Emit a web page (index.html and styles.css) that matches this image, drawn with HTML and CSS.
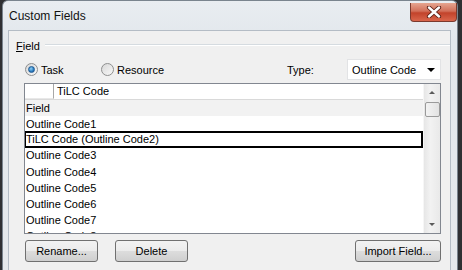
FILE: index.html
```html
<!DOCTYPE html>
<html lang="en">
<head>
    <meta charset="UTF-8">
    <title>Custom Fields</title>
    <link rel="stylesheet" href="styles.css">
</head>
<body>
    <div class="window">
        <div class="titlebar">
            <span class="title">Custom Fields</span>
            <div class="close-btn">
                <svg width="18" height="12" viewBox="0 0 18 12">
                    <path d="M4 1.5 L14 10.5 M14 1.5 L4 10.5" stroke="#5a1e14" stroke-width="4.2" stroke-linecap="round"/>
                    <path d="M4 1.5 L14 10.5 M14 1.5 L4 10.5" stroke="#ffffff" stroke-width="2.4" stroke-linecap="round"/>
                </svg>
            </div>
        </div>

        <div class="client">
            <div class="group-head">
                <span class="group-label"><u>F</u>ield</span>
                <span class="group-line"></span>
            </div>

            <div class="option-row">
                <label class="radio">
                    <span class="radio-dot checked"></span>Task
                </label>
                <label class="radio">
                    <span class="radio-dot"></span>Resource
                </label>
                <span class="type-label">Type:</span>
                <div class="combo">
                    <span>Outline Code</span>
                    <span class="combo-arrow"></span>
                </div>
            </div>

            <div class="list">
                <div class="list-body">
                    <div class="edit-row">
                        <span class="edit-cell"></span>
                        <span class="edit-text">TiLC Code</span>
                    </div>
                    <div class="list-header">Field</div>
                    <div class="list-row">Outline Code1</div>
                    <div class="list-row selected">TiLC Code (Outline Code2)</div>
                    <div class="list-row">Outline Code3</div>
                    <div class="list-row">Outline Code4</div>
                    <div class="list-row">Outline Code5</div>
                    <div class="list-row">Outline Code6</div>
                    <div class="list-row">Outline Code7</div>
                    <div class="list-row">Outline Code8</div>
                </div>
                <div class="scrollbar">
                    <div class="scroll-btn"><span class="arrow-up"></span></div>
                    <div class="scroll-thumb"></div>
                    <div class="scroll-track"></div>
                    <div class="scroll-btn"><span class="arrow-down"></span></div>
                </div>
            </div>

            <div class="button-row">
                <button class="btn">Rename...</button>
                <button class="btn">Delete</button>
                <button class="btn btn-import">Import Field...</button>
            </div>
        </div>
    </div>
</body>
</html>
```

FILE: styles.css
```css
body {
    margin: 0;
    background-color: #2f3033;
    font-family: "Liberation Sans", Arial, sans-serif;
    font-size: 11px;
    color: #000;
    height: 270px;
    overflow: hidden;
}
.window {
    margin-left: 2px;
    width: 454px;
    height: 280px;
    background: linear-gradient(#e9edf1, #e2e7ec 40px, #e6e9ec);
    border: 1px solid #7a848e;
    border-bottom: none;
    border-radius: 6px 6px 0 0;
    display: flex;
    flex-direction: column;
}
.titlebar {
    height: 29px;
    display: flex;
    align-items: flex-start;
    padding-left: 6px;
}
.title {
    font-size: 12px;
    margin-top: 8px;
    color: #111;
}
.close-btn {
    margin-left: auto;
    margin-top: 2px;
    width: 45px;
    height: 18px;
    border: 1px solid #7b3a2e;
    border-top: none;
    border-radius: 0 0 4px 4px;
    background: linear-gradient(#e6a590, #d2705a 45%, #c2432b 55%, #d9664c);
    display: flex;
    justify-content: center;
    align-items: center;
}
.client {
    flex: 1;
    margin: 0 6px 0 5px;
    background-color: #f0f0f0;
    border: 1px solid #b4bcc5;
    border-bottom: none;
    padding-top: 9px;
}
.group-head {
    height: 12px;
    display: flex;
    align-items: center;
    padding-left: 7px;
}
.group-label {
    margin-right: 5px;
}
.group-label u {
    text-decoration-thickness: 1px;
}
.group-line {
    flex: 1;
    height: 1px;
    margin-top: -2px;
    background-color: #d5dbe0;
    border-bottom: 1px solid #fff;
}
.option-row {
    margin-top: 7px;
    height: 21px;
    display: flex;
    align-items: center;
    padding: 0 9px 0 16px;
}
.radio {
    display: flex;
    align-items: center;
    width: 76px;
}
.radio-dot {
    width: 11px;
    height: 11px;
    border: 1px solid #8e8f8f;
    border-radius: 50%;
    background: linear-gradient(135deg, #d8d8d8, #f8f8f8);
    margin-right: 3px;
    display: flex;
    justify-content: center;
    align-items: center;
}
.radio-dot.checked::after {
    content: "";
    width: 5px;
    height: 5px;
    border-radius: 50%;
    background: radial-gradient(circle at 40% 35%, #8fd0f5, #2a7cc0 60%, #1d4f88);
    border: 1px solid #1f5a94;
}
.type-label {
    margin-left: auto;
    width: 60px;
}
.combo {
    width: 85px;
    height: 19px;
    background-color: #fff;
    border: 1px solid #e2e3e5;
    display: flex;
    align-items: center;
    padding: 0 3px 0 4px;
}
.combo-arrow {
    margin-left: auto;
    margin-right: 2px;
    width: 0;
    height: 0;
    border-left: 4px solid transparent;
    border-right: 4px solid transparent;
    border-top: 4px solid #000;
}
.list {
    margin: 3px 9px 0 15px;
    height: 149px;
    border: 1px solid #828790;
    background-color: #fff;
    display: flex;
    overflow: hidden;
}
.list-body {
    flex: 1;
    overflow: hidden;
}
.edit-row {
    height: 15px;
    display: flex;
    border-bottom: 1px solid #d9d9d9;
}
.edit-cell {
    width: 28px;
    border-right: 1px solid #a8a8a8;
    border-bottom: 1px solid #e8e8e8;
}
.edit-text {
    padding: 1px 0 0 3px;
}
.list-header {
    height: 16px;
    line-height: 16px;
    padding-left: 1px;
    background-color: #f2f2f2;
}
.list-row {
    height: 16px;
    line-height: 16px;
    padding-left: 1px;
}
.list-row.selected {
    height: 13px;
    line-height: 13px;
    border: 2px solid #000;
    margin: -1px 0 0 -1px;
    padding-left: 0;
}
.list-row.selected + .list-row {
    margin-top: -1px;
    height: 17px;
}
.scrollbar {
    width: 16px;
    background: linear-gradient(90deg, #e6e6e6, #f2f2f2 40%, #e9e9e9);
    display: flex;
    flex-direction: column;
    align-items: center;
    border-left: 1px solid #f6f6f6;
}
.scroll-btn {
    height: 17px;
    width: 100%;
    display: flex;
    justify-content: center;
    align-items: center;
}
.arrow-up, .arrow-down {
    width: 0;
    height: 0;
    border-left: 3px solid transparent;
    border-right: 3px solid transparent;
}
.arrow-up {
    border-bottom: 3px solid #5a5a5a;
}
.arrow-down {
    border-top: 3px solid #5a5a5a;
}
.scroll-thumb {
    margin-top: 1px;
    width: 13px;
    height: 13px;
    border: 1px solid #9a9a9a;
    border-radius: 2px;
    background: linear-gradient(90deg, #f3f3f3, #e2e2e2);
}
.scroll-track {
    flex: 1;
}
.button-row {
    margin-top: 6px;
    display: flex;
    gap: 17px;
    padding: 0 9px 0 16px;
}
.btn {
    width: 73px;
    height: 22px;
    border: 1px solid #707070;
    border-radius: 3px;
    background: linear-gradient(#f2f2f2, #ebebeb 50%, #dddddd 50%, #cfcfcf);
    font-family: "Liberation Sans", Arial, sans-serif;
    font-size: 11px;
    color: #000;
    padding: 0;
}
.btn-import {
    margin-left: auto;
    width: 86px;
}
```
